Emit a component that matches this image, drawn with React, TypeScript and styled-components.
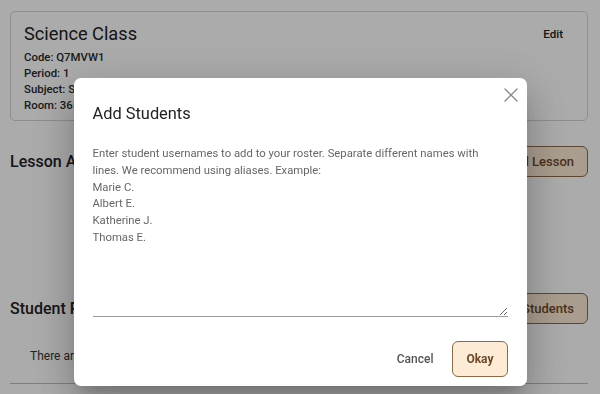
import styled, { createGlobalStyle } from "styled-components";
import { X } from "lucide-react";

const GlobalStyle = createGlobalStyle`
  html, body {
    margin: 0;
    padding: 0;
    background: #ffffff;
    font-family: Roboto, "Liberation Sans", Arial, sans-serif;
  }
`;

export default function App() {
  return (
    <>
      <GlobalStyle />
      <Page>
        <ClassCard>
          <CardHeader>
            <ClassTitle>Science Class</ClassTitle>
            <TextButton>Edit</TextButton>
          </CardHeader>
          <InfoLine>Code: Q7MVW1</InfoLine>
          <InfoLine>Period: 1</InfoLine>
          <InfoLine>Subject: Science</InfoLine>
          <InfoLine>Room: 365</InfoLine>
        </ClassCard>

        <SectionRow $first>
          <SectionTitle>Lesson Assignments</SectionTitle>
          <BrownButton>Add Lesson</BrownButton>
        </SectionRow>
        <EmptyArea />

        <SectionRow>
          <SectionTitle>Student Roster</SectionTitle>
          <BrownButton>Add Students</BrownButton>
        </SectionRow>
        <EmptyText>There are no students in this class yet.</EmptyText>
        <Divider />
      </Page>

      <Backdrop>
        <Dialog role="dialog">
          <CloseButton aria-label="close">
            <X size={24} strokeWidth={1.4} />
          </CloseButton>
          <DialogTitle>Add Students</DialogTitle>
          <NamesField
            defaultValue={
              "Enter student usernames to add to your roster. Separate different names with lines. We recommend using aliases. Example:\nMarie C.\nAlbert E.\nKatherine J.\nThomas E."
            }
          />
          <Actions>
            <TextButton $muted>Cancel</TextButton>
            <BrownButton $small>Okay</BrownButton>
          </Actions>
        </Dialog>
      </Backdrop>
    </>
  );
}

const Page = styled.div`
  padding: 11px 12px 0 10px;
  color: #222;
`;

const ClassCard = styled.div`
  border: 1px solid #d4d4d4;
  border-radius: 5px;
  padding: 6px 13px 7px;
`;

const CardHeader = styled.div`
  display: flex;
  align-items: center;
  justify-content: space-between;
  height: 31px;
`;

const ClassTitle = styled.h2`
  margin: 0;
  font-size: 18.2px;
  line-height: 24px;
  font-weight: 400;
`;

const TextButton = styled.button<{ $muted?: boolean }>`
  border: none;
  background: none;
  font-family: inherit;
  font-size: ${(p) => (p.$muted ? "12px" : "11.6px")};
  font-weight: 500;
  color: ${(p) => (p.$muted ? "#555" : "#222")};
  padding: ${(p) => (p.$muted ? "8px 13px" : "6px 10px")};
  margin-right: ${(p) => (p.$muted ? "0" : "1px")};
  cursor: pointer;
`;

const InfoLine = styled.div`
  font-size: 11.4px;
  line-height: 16px;
  font-weight: 500;
  color: #2a2a2a;
`;

const SectionRow = styled.div<{ $first?: boolean }>`
  display: flex;
  align-items: center;
  justify-content: space-between;
  margin-top: ${(p) => (p.$first ? "25px" : "26px")};
`;

const SectionTitle = styled.h3`
  margin: 0;
  font-size: 16px;
  font-weight: 500;
  color: #222;
`;

const BrownButton = styled.button<{ $small?: boolean }>`
  height: ${(p) => (p.$small ? "36px" : "31px")};
  padding: 0 13px;
  border: 1px solid #8c6a48;
  border-radius: 6px;
  background: #fdebd5;
  color: #6e4a2a;
  font-family: inherit;
  font-size: ${(p) => (p.$small ? "12px" : "13px")};
  font-weight: ${(p) => (p.$small ? 700 : 500)};
  cursor: pointer;
`;

const EmptyArea = styled.div`
  height: 90px;
`;

const EmptyText = styled.p`
  margin: 24px 0 0 20px;
  font-size: 12px;
  line-height: 16px;
  color: #333;
`;

const Divider = styled.hr`
  margin: 19px 0 0;
  border: none;
  border-top: 1px solid #bdbdbd;
`;

const Backdrop = styled.div`
  position: fixed;
  inset: 0;
  background: rgba(0, 0, 0, 0.33);
  display: flex;
  justify-content: center;
  align-items: flex-start;
  padding-top: 78px;
`;

const Dialog = styled.div`
  position: relative;
  width: 453px;
  box-sizing: border-box;
  background: #fff;
  border-radius: 7px;
  padding: 24px 19px 9px 19px;
  box-shadow: 0 11px 15px -7px rgba(0, 0, 0, 0.2),
    0 24px 38px 3px rgba(0, 0, 0, 0.14), 0 9px 46px 8px rgba(0, 0, 0, 0.12);
`;

const CloseButton = styled.button`
  position: absolute;
  top: 5px;
  right: 4px;
  width: 24px;
  height: 24px;
  padding: 0;
  border: none;
  background: none;
  color: #8a8a8a;
  display: flex;
  align-items: center;
  justify-content: center;
  cursor: pointer;
`;

const DialogTitle = styled.h2`
  margin: 0;
  font-size: 16.4px;
  line-height: 24px;
  font-weight: 400;
  color: #222;
`;

const NamesField = styled.textarea`
  display: block;
  width: 100%;
  height: 175px;
  box-sizing: border-box;
  margin-top: 16px;
  padding: 4px 0 0;
  border: none;
  border-bottom: 1px solid #9a9a9a;
  outline: none;
  resize: vertical;
  font-family: Roboto, "Liberation Sans", Arial, sans-serif;
  font-size: 11.3px;
  line-height: 16.8px;
  color: #666;
  background: transparent;
`;

const Actions = styled.div`
  display: flex;
  justify-content: flex-end;
  align-items: center;
  gap: 6px;
  margin-top: 24px;
`;
